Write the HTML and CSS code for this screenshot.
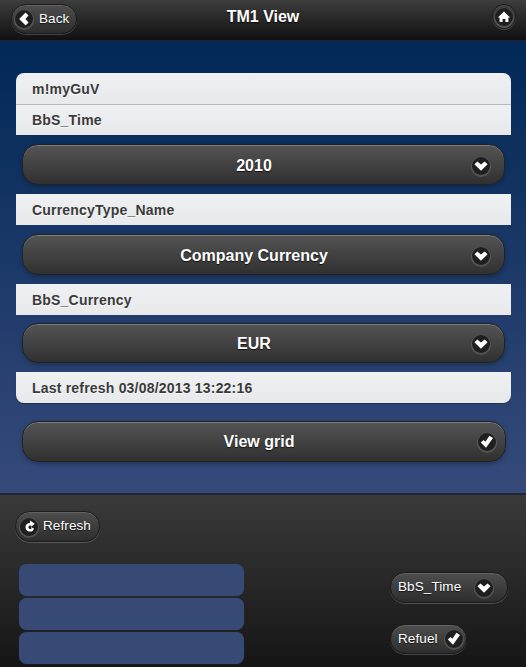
FILE: index.html
```html
<!DOCTYPE html>
<html lang="en">
<head>
<meta charset="utf-8">
<title>TM1 View</title>
<link rel="stylesheet" href="styles.css">
</head>
<body>
<svg class="defs" width="0" height="0" aria-hidden="true">
  <symbol id="i-down" viewBox="0 0 18 18"><path d="M2.4 7.2 5.4 4.4 9 7.6 12.6 4.4 15.6 7.2 9 13.8Z" fill="#fff"/></symbol>
  <symbol id="i-check" viewBox="0 0 18 18"><path d="M2.8 9.6 5.6 7 7.4 8.8 11.4 2.8 15 5 8 14.8Z" fill="#fff"/></symbol>
  <symbol id="i-left" viewBox="0 0 18 18"><path d="M10.6 2.6 13.5 5.6 10.4 9 13.5 12.4 10.6 15.4 4.2 9Z" fill="#fff"/></symbol>
  <symbol id="i-home" viewBox="0 0 18 18"><path d="M9 3.6 15.2 9.6H13.4V14H10.4V11H7.6V14H4.6V9.6H2.8Z" fill="#fff"/></symbol>
  <symbol id="i-refresh" viewBox="0 0 18 18"><path d="M10 2.6V5A4.2 4.2 0 0 0 9.6 13.6 4.4 4.4 0 0 0 14 10.4L10.8 9.2 14.8 5.8ZM9.6 7.6A1.8 1.8 0 1 1 9.6 11 1.8 1.8 0 0 1 9.6 7.6Z" fill="#fff" fill-rule="evenodd"/></symbol>
</svg>
<div class="page">
  <header class="topbar">
    <a class="btn btn-back"><span class="ico"><svg><use href="#i-left"/></svg></span><span class="btn-label">Back</span></a>
    <h1 class="title">TM1 View</h1>
    <a class="btn btn-home"><span class="ico"><svg><use href="#i-home"/></svg></span></a>
  </header>
  <main class="content">
    <div class="list">
      <div class="row row-first">m!myGuV</div>
      <div class="row row-line">BbS_Time</div>
      <div class="select"><span class="select-text">2010</span><span class="ico"><svg><use href="#i-down"/></svg></span></div>
      <div class="row">CurrencyType_Name</div>
      <div class="select"><span class="select-text">Company Currency</span><span class="ico"><svg><use href="#i-down"/></svg></span></div>
      <div class="row">BbS_Currency</div>
      <div class="select select-short"><span class="select-text">EUR</span><span class="ico"><svg><use href="#i-down"/></svg></span></div>
      <div class="row row-last">Last refresh 03/08/2013 13:22:16</div>
    </div>
    <div class="select select-grid"><span class="select-text">View grid</span><span class="ico"><svg><use href="#i-check"/></svg></span></div>
  </main>
  <footer class="footer">
    <a class="btn btn-refresh"><span class="ico"><svg><use href="#i-refresh"/></svg></span><span class="btn-label">Refresh</span></a>
    <div class="footer-grid">
      <div class="boxes">
        <div class="box"></div>
        <div class="box"></div>
        <div class="box"></div>
      </div>
      <div class="controls">
        <a class="btn btn-time"><span class="btn-label">BbS_Time</span><span class="ico"><svg><use href="#i-down"/></svg></span></a>
        <a class="btn btn-refuel"><span class="btn-label">Refuel</span><span class="ico"><svg><use href="#i-check"/></svg></span></a>
      </div>
    </div>
  </footer>
</div>
</body>
</html>
```
FILE: styles.css
```css
* { box-sizing: border-box; }
html, body { margin: 0; padding: 0; }
body {
  width: 526px;
  height: 667px;
  overflow: hidden;
  font-family: "Liberation Sans", Arial, sans-serif;
  background: #222;
}
.defs { position: absolute; }
.page { display: flex; flex-direction: column; height: 667px; }

.ico {
  flex: none;
  display: flex;
  width: 18px;
  height: 18px;
  border-radius: 50%;
  background: #1f1f1f;
  box-shadow: 0 0 0 1px rgba(90,90,90,.35), 0 1px 0 1px rgba(255,255,255,.14);
}
.ico svg { width: 18px; height: 18px; display: block; }

.btn {
  display: flex;
  align-items: center;
  color: #fff;
  font-size: 13.5px;
  letter-spacing: .1px;
  text-shadow: 0 1px 1px #111;
  border: 1px solid #1c1c1c;
  background: linear-gradient(#4e4e4e, #2d2d2d);
  box-shadow: inset 0 1px 0 rgba(255,255,255,.12), 0 1px 0 rgba(255,255,255,.2);
}
.btn-label { margin-top: -2px; }

.topbar {
  flex: none;
  height: 41px;
  display: flex;
  align-items: flex-start;
  justify-content: space-between;
  padding: 4px 10px 0 11px;
  position: relative;
  background: linear-gradient(#3d3d3d, #101010);
  border-bottom: 1px solid #222;
}
.title {
  position: absolute;
  left: 0;
  right: 0;
  top: 8px;
  margin: 0;
  text-align: center;
  font-size: 16px;
  line-height: 18px;
  font-weight: 700;
  color: #fff;
  text-shadow: 0 1px 1px #000;
}
.btn-back {
  width: 66px;
  height: 30px;
  border-radius: 15px;
  padding-left: 3px;
  gap: 6px;
}
.btn-home {
  width: 24px;
  height: 25px;
  border-radius: 50%;
  justify-content: center;
  background: #3a3a3a;
}

.content {
  flex: none;
  height: 454px;
  padding: 32px 15px 0 16px;
  background: linear-gradient(#012857, #364a7a);
  border-bottom: 2px solid #20263a;
}
.list { display: flex; flex-direction: column; }
.row {
  height: 31px;
  padding-left: 16px;
  display: flex;
  align-items: center;
  font-size: 14px;
  font-weight: 700;
  letter-spacing: .2px;
  color: #3a3a3a;
  background: linear-gradient(#eef0f2, #e8e9eb);
  text-shadow: 0 1px 0 #fff;
}
.row-first { border-radius: 8px 8px 0 0; border-bottom: 1px solid #b9babc; height: 32px; }
.row-line { height: 30px; }
.row-last { border-radius: 0 0 8px 8px; box-shadow: 0 1px 1px rgba(0,0,0,.3); }

.select {
  height: 41px;
  margin: 9px 6px;
  padding: 2px 14px 0 0;
  display: flex;
  align-items: center;
  border-radius: 16px;
  color: #fff;
  font-size: 16px;
  font-weight: 700;
  text-shadow: 0 1px 1px #111;
  background: linear-gradient(#545454, #303030);
  border: 1px solid #222;
  box-shadow: inset 0 1px 0 rgba(255,255,255,.25), 0 2px 4px rgba(0,0,0,.25);
}
.select-short { height: 40px; margin-top: 8px; }
.select-text { flex: 1; text-align: center; padding-left: 13px; }
.select-grid { margin: 18px 5px 0 6px; padding: 1px 9px 0 0; }
.select-grid .select-text { padding-left: 17px; }

.footer {
  flex: 1;
  padding: 16px 18px 0 15px;
  background: linear-gradient(#3a3a3a, #151515);
}
.btn-refresh {
  width: 85px;
  height: 31px;
  border-radius: 15px;
  padding-left: 4px;
  gap: 5px;
}
.footer-grid {
  display: flex;
  justify-content: space-between;
  margin-top: 22px;
  padding-left: 4px;
}
.boxes { width: 225px; display: flex; flex-direction: column; gap: 2px; }
.box {
  height: 32px;
  border-radius: 8px;
  background: #374a75;
  box-shadow: 0 0 1px rgba(60,78,120,.8);
}
.controls {
  display: flex;
  flex-direction: column;
  align-items: flex-start;
  width: 118px;
  padding-top: 8px;
  gap: 21px;
}
.btn-time {
  width: 118px;
  height: 31px;
  border-radius: 15px;
  padding: 0 14px 0 7px;
  justify-content: space-between;
}
.btn-refuel {
  width: 77px;
  height: 30px;
  border-radius: 15px;
  padding: 0 3px 0 7px;
  justify-content: space-between;
}
```
